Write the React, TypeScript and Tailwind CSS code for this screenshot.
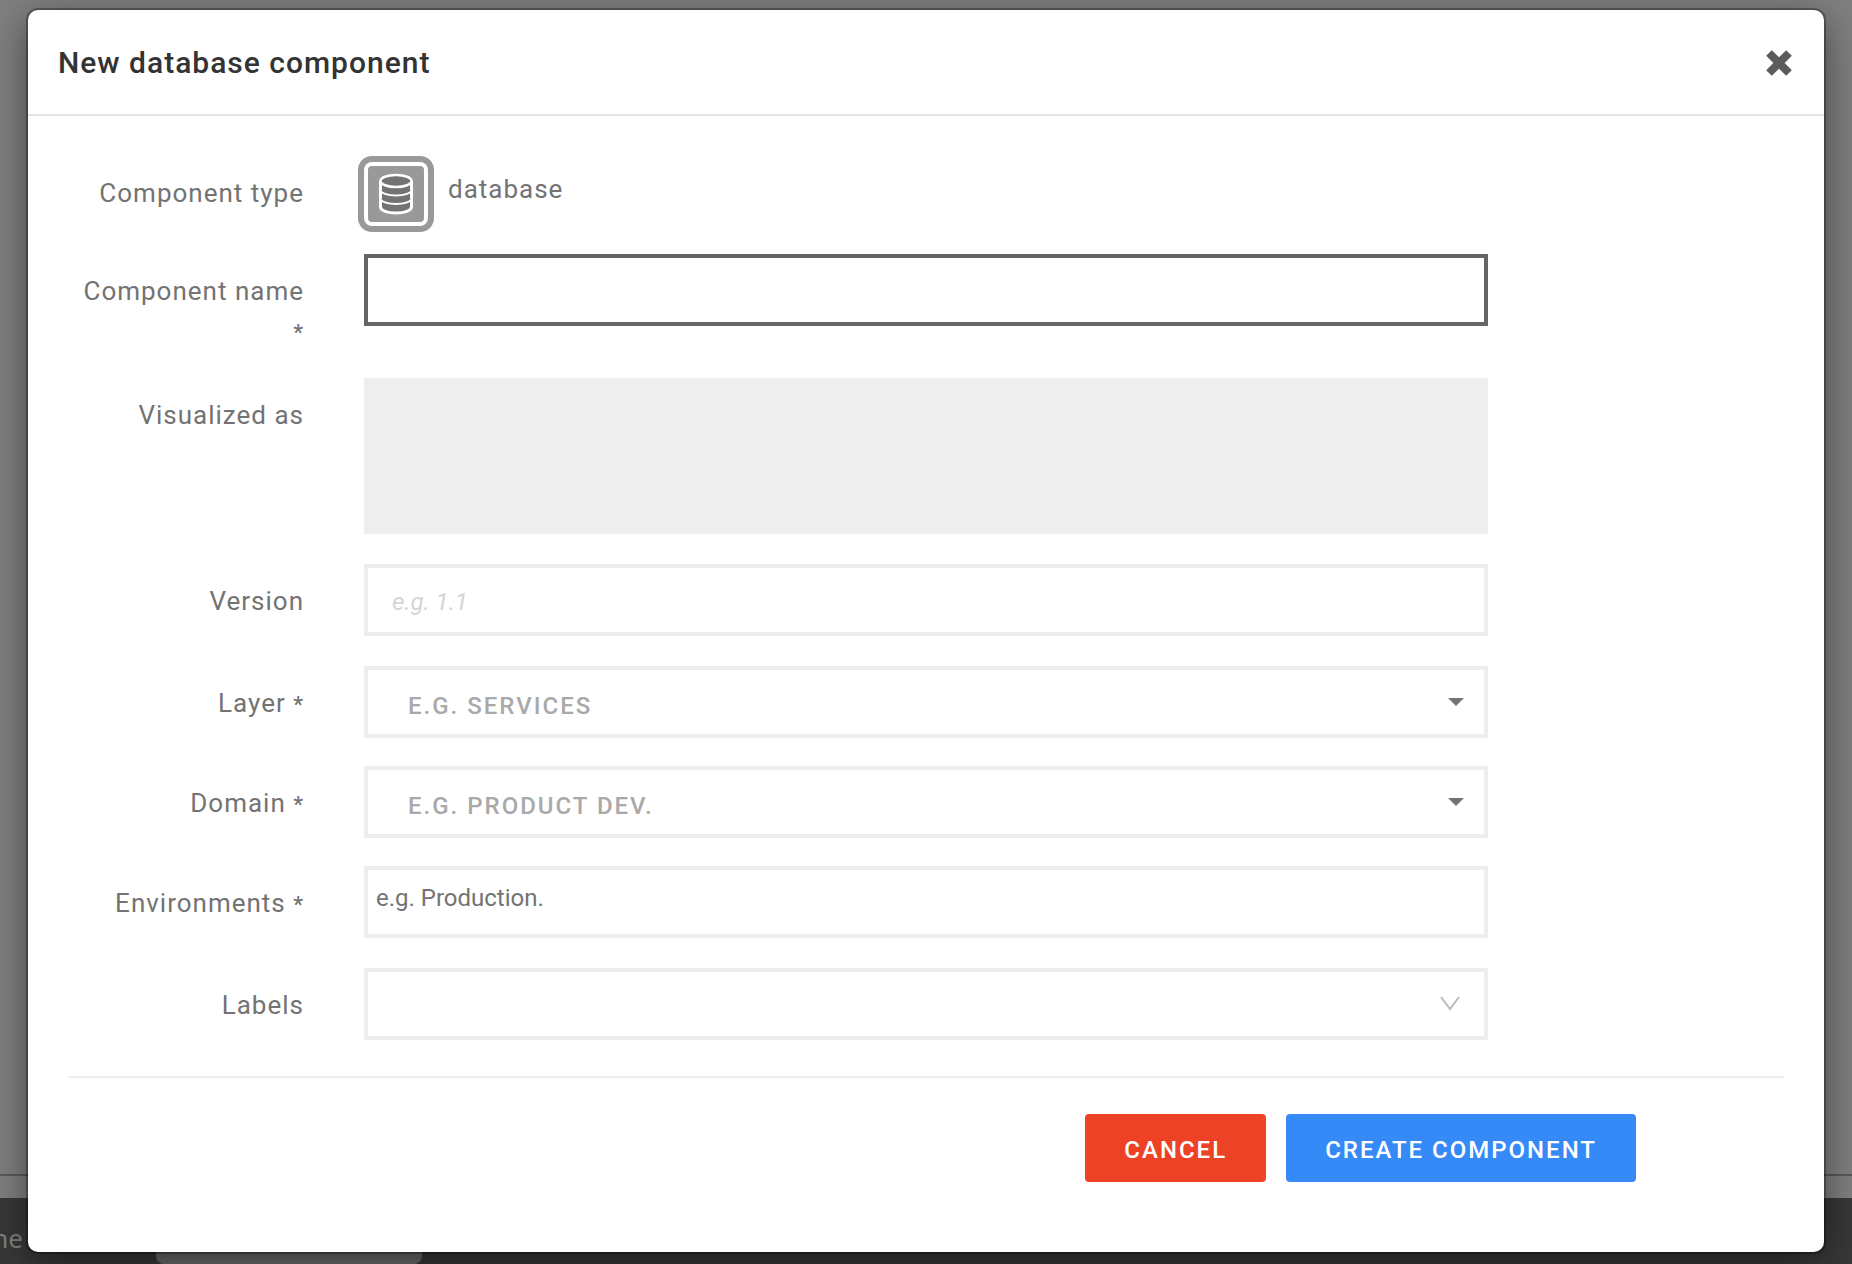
import React from "react";

const label = "col-span-2 text-right text-[26px] leading-10 tracking-[1px] text-[#737373]";
const field = "block h-[72px] w-full border-4 border-[#eeeeee] bg-white outline-none";
const dropdown = `${field} appearance-none pl-10 pr-16 pt-2 text-2xl font-medium tracking-[2px] text-[#a9a9a9]`;

function Row({ id, text, required, className = "", children }: { id: string; text: string; required?: boolean; className?: string; children: React.ReactNode }) {
  return (
    <div className={`grid grid-cols-12 gap-x-[60px] ${className}`}>
      <label htmlFor={id} className={`${label} pt-[17px]`}>
        {text}
        {required && <> <span className="text-[22px] font-medium">*</span></>}
      </label>
      <div className="relative col-span-8">{children}</div>
    </div>
  );
}

function Caret() {
  return (
    <svg className="pointer-events-none absolute right-6 top-8 h-2 w-4" viewBox="0 0 16 8" fill="#737373" aria-hidden="true">
      <path d="M0 0h16L8 8z" />
    </svg>
  );
}

function DatabaseIcon() {
  return (
    <svg className="h-[76px] w-[76px]" viewBox="0 0 76 76" aria-hidden="true">
      <rect width="76" height="76" rx="14" fill="#999" />
      <rect x="8" y="8" width="60" height="60" rx="6" fill="#999" stroke="#fff" strokeWidth="4" />
      <g fill="#737373" stroke="#fff">
        <path strokeWidth="3" d="M22.500 25v26c0 3.500 7 6 15.500 6s15.500-2.500 15.500-6V25" />
        <path strokeWidth="2" d="M22.500 42.500c0 3 7 5.500 15.500 5.500s15.500-2.500 15.500-5.500M22.500 34c0 3 7 5.500 15.500 5.500s15.500-2.500 15.500-5.500" />
        <ellipse strokeWidth="2.500" cx="38" cy="25" rx="15.500" ry="6" />
      </g>
    </svg>
  );
}

export default function App() {
  return (
    <div className="relative flex min-h-screen flex-col overflow-hidden bg-[#808080] font-['Roboto',sans-serif]">
      <div className="absolute inset-0 flex flex-col" aria-hidden="true">
        <div className="flex-1 border-b-2 border-[#5a5a5a]" />
        <div className="h-[22px] bg-[#808080]" />
        <div className="flex h-[66px] bg-[#383838]">
          <div className="flex w-[156px] items-center">
            <span className="flex w-[23px] justify-end pt-3.5 font-['Noto_Sans',sans-serif] text-[26px] text-[#808080]">ne</span>
          </div>
          <div className="w-[266px] rounded-b-lg bg-[#6a6a6a]" />
        </div>
      </div>

      <form
        role="dialog"
        aria-labelledby="title"
        className="relative mx-7 mb-3 mt-2.5 flex flex-1 flex-col rounded-[10px] bg-white shadow-[0_0_0_2px_rgba(0,0,0,0.3),0_10px_40px_rgba(0,0,0,0.5)]"
      >
        <header className="flex h-[106px] items-center justify-between border-b-2 border-[#e5e5e5] px-[30px] pt-0.5">
          <h1 id="title" className="text-[30px] font-medium leading-10 tracking-[1px] text-[#333333]">New database component</h1>
          <button type="button" aria-label="Close">
            <svg className="h-[30px] w-[30px]" viewBox="0 0 30 30" fill="none" stroke="#5c5c5c" strokeWidth="8" strokeLinejoin="round" aria-hidden="true">
              <path d="M5 5l20 20M25 5L5 25" />
            </svg>
          </button>
        </header>

        <div className="px-10 pt-10">
          <div className="grid grid-cols-12 gap-x-[60px]">
            <span className={`${label} pt-[17px]`}>Component type</span>
            <div className="col-span-8 -ml-1.5 flex">
              <DatabaseIcon />
              <span className="pl-3.5 pt-[13px] text-[26px] leading-10 tracking-[1px] text-[#737373]">database</span>
            </div>
          </div>

          <Row id="name" text="Component name" required className="mt-[22px]">
            <input id="name" autoComplete="off" className="block h-[72px] w-full border-4 border-[#666666] bg-white px-6 text-2xl outline-none" />
          </Row>
          <Row id="visual" text="Visualized as" className="mt-[25px]">
            <output id="visual" className="block h-[156px] bg-[#eeeeee]" />
          </Row>
          <Row id="version" text="Version" className="mt-[30px]">
            <input id="version" placeholder="e.g. 1.1" className={`${field} px-6 pt-1 text-2xl placeholder:italic placeholder:text-[#d5d5d5]`} />
          </Row>
          <Row id="layer" text="Layer" required className="mt-[30px]">
            <select id="layer" className={dropdown}>
              <option>E.G. SERVICES</option>
            </select>
            <Caret />
          </Row>
          <Row id="domain" text="Domain" required className="mt-7">
            <select id="domain" className={dropdown}>
              <option>E.G. PRODUCT DEV.</option>
            </select>
            <Caret />
          </Row>
          <Row id="environments" text="Environments" required className="mt-7">
            <input id="environments" placeholder="e.g. Production." className={`${field} px-2 pb-2 text-2xl placeholder:text-[#737373]`} />
          </Row>
          <Row id="labels" text="Labels" className="mt-[30px]">
            <select id="labels" className={dropdown} />
            <svg className="pointer-events-none absolute right-7 top-7 h-4 w-5" viewBox="0 0 20 16" fill="none" stroke="#bbbbbb" strokeWidth="2" aria-hidden="true">
              <path d="M1 1l9 12 9-12" />
            </svg>
          </Row>

          <footer className="mt-9 grid grid-cols-12 gap-x-[60px] border-t-2 border-[#eeeeee] pt-9">
            <div className="col-span-11 flex justify-end gap-5 text-2xl font-medium tracking-[2px] text-white">
              <button type="button" className="h-[68px] rounded bg-[#ee4226] px-[39px] pt-1">CANCEL</button>
              <button type="submit" className="h-[68px] rounded bg-[#368af8] px-[39px] pt-1">CREATE COMPONENT</button>
            </div>
          </footer>
        </div>
      </form>
    </div>
  );
}
